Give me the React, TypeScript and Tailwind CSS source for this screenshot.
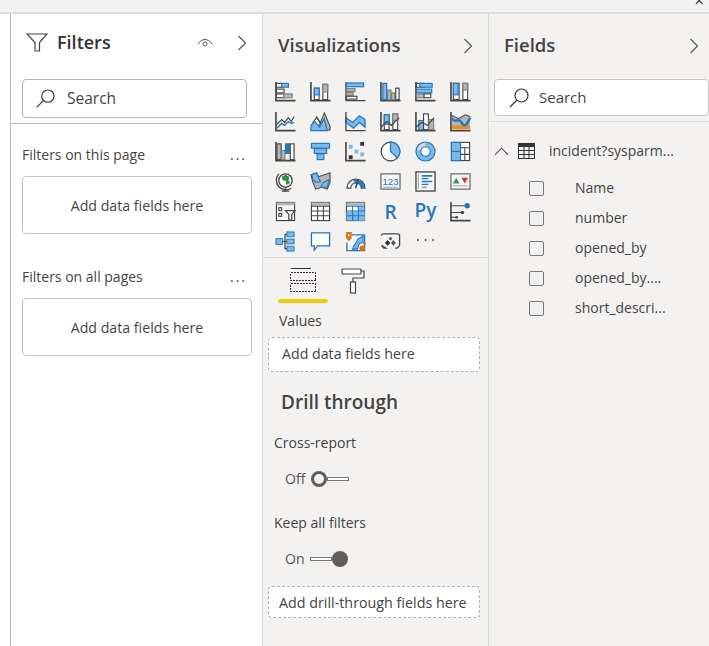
import React from 'react';

const D = '#454545';
const B = '#2277bd';
const L = '#7db8ea';
const G = '#b5b5b5';
const M = '#808080';
const W = '#ffffff';

const Axis = () => <path d="M1 1V20.5H21.5" fill="none" stroke={D} strokeWidth="1.7" />;

const Rect = ({ x, y, w, h, f = W, s = D }: { x: number; y: number; w: number; h: number; f?: string; s?: string }) => (
  <rect x={x} y={y} width={w} height={h} fill={f} stroke={s} strokeWidth="1.2" />
);

// la palette de visuels, ligne par ligne
const icons: React.ReactNode[] = [
  <><Axis /><Rect x={1.5} y={2.5} w={6} h={4} /><Rect x={7} y={2.5} w={7} h={4} f={L} s={B} /><Rect x={1.5} y={8.5} w={8} h={4} /><Rect x={1.5} y={13.5} w={8} h={4} /><Rect x={9} y={13.5} w={9} h={4} f={G} s={M} /></>,
  <><Axis /><Rect x={4.5} y={7.5} w={5} h={12} /><Rect x={4.5} y={7.5} w={5} h={7} f={L} s={B} /><Rect x={13.5} y={3.5} w={5} h={16} /><Rect x={13.5} y={3.5} w={5} h={8} f={G} s={M} /></>,
  <><path d="M1 1V20.5H21.5" fill="none" stroke={D} strokeWidth="1.4" /><Rect x={1.5} y={2} w={18} h={4} f={L} s={B} /><Rect x={1.5} y={8} w={9} h={3} f={G} s={M} /><Rect x={1.5} y={12} w={7} h={3} f={G} s={M} /><Rect x={1.5} y={16} w={11} h={3} /></>,
  <><Axis /><Rect x={3} y={2.5} w={4} h={17} f={L} s={B} /><Rect x={8} y={9.5} w={3.5} h={10} f={G} s={M} /><Rect x={12} y={12.5} w={3.5} h={7} f={G} s={M} /><Rect x={16.5} y={7.5} w={3.5} h={12} /></>,
  <><Axis /><Rect x={1.5} y={2.5} w={8} h={4} /><Rect x={5} y={2.5} w={13} h={4} f={L} s={B} /><Rect x={1.5} y={8.5} w={16} h={4} f={L} s={B} /><Rect x={1.5} y={13.5} w={8} h={4} f={G} s={M} /><Rect x={9.5} y={13.5} w={7} h={4} /></>,
  <><Axis /><Rect x={3.5} y={2.5} w={6} h={17} /><Rect x={3.5} y={2.5} w={5} h={12} f={L} s={B} /><Rect x={13.5} y={2.5} w={5} h={17} /><Rect x={13.5} y={2.5} w={5} h={7} f={G} s={M} /></>,

  <><Axis /><path d="M2 14L7 9L10 12L14 7L17 11L20 6" fill="none" stroke={D} strokeWidth="1.3" /><path d="M2 18L7 13L10 15L14 11L17 13L20 12" fill="none" stroke={B} strokeWidth="1.4" /></>,
  <><path d="M1 20L7 6L11 12L15 2L21 16V20Z" fill={G} stroke={D} strokeWidth="1.1" /><path d="M7 7L11 13L8 16L3 12Z" fill={W} stroke={D} strokeWidth="1.1" /><path d="M1 20.5V15L5 11L10 17L15 8L18 20.5Z" fill={L} stroke={B} strokeWidth="1.2" /></>,
  <><path d="M1 7L8 12L15 5L21 9V17L15 12L9 18L1 12Z" fill={L} stroke={B} strokeWidth="1.3" /><path d="M1 1V20.5H21.5" fill="none" stroke={D} strokeWidth="1.4" /></>,
  <><Axis /><Rect x={4.5} y={4} w={5} h={15.5} /><Rect x={4.5} y={4} w={5} h={10} f={L} s={B} /><Rect x={13.5} y={3} w={5} h={16.5} /><Rect x={13.5} y={3} w={5} h={7} f={G} s={M} /><path d="M1 17L7 11L12 15L20 7" fill="none" stroke={D} strokeWidth="1.3" /></>,
  <><Axis /><Rect x={4} y={10} w={5} h={9.5} f={L} s={B} /><Rect x={9} y={3} w={5} h={16.5} /><Rect x={14.5} y={9} w={5} h={10.5} f={G} s={M} /><path d="M1 17L7 12L13 15L20 7" fill="none" stroke={D} strokeWidth="1.3" /></>,
  <><path d="M2 4L9 7L16 3L21 5V18H2Z" fill={G} /><path d="M2 15H21V19H2Z" fill="#e8901e" /><path d="M2 8C6 14 9 6 12 12S18 14 21 7" fill="none" stroke={B} strokeWidth="2.6" /><path d="M2 5L9 8L16 4L21 6" fill="none" stroke={D} strokeWidth="1" /><Axis /></>,

  <><Axis /><Rect x={2} y={3} w={4.5} h={16.5} f={G} s={D} /><Rect x={7} y={10} w={3.5} h={9.5} f={G} s={M} /><Rect x={11} y={3} w={4} h={10} f={B} s={B} /><Rect x={16} y={3} w={4} h={16.5} /></>,
  <><Rect x={1.5} y={2.5} w={19} h={5} f={L} s={B} /><Rect x={4.5} y={8} w={13} h={5} f={L} s={B} /><Rect x={7.5} y={13.5} w={7} h={6} f={L} s={B} /></>,
  <><Axis /><rect x="4" y="4" width="4" height="4" fill={L} /><rect x="10" y="9" width="4" height="4" fill={L} /><rect x="16" y="12" width="4" height="4" fill={L} /><rect x="16" y="1" width="4" height="4" fill="#333" /><rect x="4" y="15" width="4" height="4" fill="#333" /></>,
  <><circle cx="11" cy="11" r="9.8" fill={W} stroke={D} strokeWidth="1.3" /><path d="M11 1.2A9.8 9.8 0 0 1 18 17.8L11 11Z" fill={L} stroke={B} strokeWidth="1.3" /></>,
  <><circle cx="11" cy="11" r="7.5" fill="none" stroke={L} strokeWidth="4.5" /><path d="M3.6 9.5A7.5 7.5 0 0 1 11 3.5" fill="none" stroke="#d8d8d8" strokeWidth="4.5" /><circle cx="11" cy="11" r="10" fill="none" stroke={B} strokeWidth="1.2" /><circle cx="11" cy="11" r="5" fill={W} stroke={B} strokeWidth="1.2" /></>,
  <><Rect x={1.5} y={1.5} w={19} h={19} /><Rect x={1.5} y={1.5} w={9.5} h={9.5} f={L} s={B} /><Rect x={1.5} y={11} w={9.5} h={9.5} f={L} s={B} /><path d="M11 7H20.5M15.5 7V20.5M11 14H20.5" stroke={D} strokeWidth="1.1" /></>,

  <><circle cx="11" cy="10" r="7" fill={W} stroke={D} strokeWidth="1.4" /><path d="M7 6L11 4L15 6L14 10L16 12L12 15L11 10L8 10Z" fill="#2e8b3d" /><path d="M4 3A10 10 0 0 0 17 18M11 18V20M7 21H15" fill="none" stroke={D} strokeWidth="1.4" /></>,
  <><path d="M1 4L7 2L9 6L15 4L21 2V12L18 19L12 17L6 19L3 12Z" fill={G} stroke={D} strokeWidth="1.1" /><path d="M2 4L7 2L9 7L11 11L6 12L3 9Z" fill={L} stroke={B} strokeWidth="1.1" /><path d="M11 17L14 12L20 9L18 17Z" fill={L} stroke={B} strokeWidth="1.1" /></>,
  <><path d="M2 18A9.5 9.5 0 0 1 21 18H17A5.5 5.5 0 0 0 6 18Z" fill={W} stroke={D} strokeWidth="1.2" /><path d="M8 10A9.5 9.5 0 0 1 21 18H17A5.5 5.5 0 0 0 11 13Z" fill={B} /><path d="M14 9L11 18" stroke={D} strokeWidth="1.7" /></>,
  <><rect x="1" y="3" width="20" height="16" fill="#f6f6f6" stroke="#6a6a6a" strokeWidth="1.3" /><rect x="3" y="16.5" width="16" height="1.2" fill={G} /><text x="11" y="14.5" textAnchor="middle" fontSize="10" fill={B} fontFamily="'Liberation Sans', sans-serif">123</text></>,
  <><rect x="1" y="1" width="20" height="20" fill="#f6f6f6" stroke={D} strokeWidth="1.4" /><path d="M3.5 3V19" stroke={G} strokeWidth="1.4" /><path d="M7 5H18M7 11H18" stroke={B} strokeWidth="1.8" /><path d="M7 8H14M7 14H14M7 17H12" stroke={B} strokeWidth="1.2" /></>,
  <><rect x="1" y="3" width="20" height="16" fill="#f6f6f6" stroke="#6a6a6a" strokeWidth="1.3" /><path d="M3 13L6.5 7L10 13Z" fill="#2e9e4f" /><path d="M12 7H19L15.5 13Z" fill="#d8343a" /><path d="M3 15.5H19" stroke={G} strokeWidth="1.2" /></>,

  <><Rect x={1.5} y={1.5} w={19} h={19} f="#f6f6f6" /><rect x="1.5" y="1.5" width="19" height="3" fill={G} /><Rect x={4} y={7} w={3} h={3} f={W} /><Rect x={4} y={13} w={3} h={3} f={W} /><path d="M11 10H21L17.5 14V20H14.5V14Z" fill={W} stroke={D} strokeWidth="1.3" /></>,
  <><Rect x={1.5} y={1.5} w={19} h={19} /><rect x="1.5" y="1.5" width="19" height="3.5" fill={G} /><path d="M1.5 5.5H20.5M1.5 10.5H20.5M1.5 15.5H20.5M8 5.5V20.5M14 5.5V20.5" stroke={D} strokeWidth="1.1" /></>,
  <><Rect x={1.5} y={1.5} w={19} h={19} /><rect x="1.5" y="1.5" width="19" height="3.5" fill={G} /><rect x="14" y="5.5" width="6.5" height="15" fill={L} /><rect x="1.5" y="11" width="19" height="9.5" fill={L} /><path d="M1.5 5.5H20.5M1.5 10.5H20.5M1.5 15.5H20.5M8 5.5V20.5M14 5.5V20.5" stroke={B} strokeWidth="1.1" /></>,
  <text x="11" y="19" textAnchor="middle" fontSize="20" fontWeight="600" fill={B} fontFamily="'Open Sans', sans-serif">R</text>,
  <text x="11" y="16.5" textAnchor="middle" fontSize="20" fontWeight="600" fill={B} fontFamily="'Open Sans', sans-serif">Py</text>,
  <><Axis /><path d="M1 5H18M1 12H13M1 17H8" stroke={D} strokeWidth="1.1" /><circle cx="18" cy="5" r="2.8" fill={B} /><circle cx="13" cy="12" r="1.8" fill={D} /><circle cx="7" cy="17" r="1.4" fill={D} /></>,

  <><rect x="1" y="8" width="7" height="6" fill={L} stroke={B} /><rect x="12.5" y="1" width="7.5" height="5" fill={L} stroke={B} /><rect x="12.5" y="8.5" width="7.5" height="5" fill={L} stroke={B} /><rect x="12.5" y="16" width="7.5" height="5" fill={L} stroke={B} /><path d="M8 11H12.5M10.5 3.5V18.5H12.5M10.5 3.5H12.5" fill="none" stroke={D} strokeWidth="1.3" /></>,
  <path d="M1.5 2H20.5V15.5H8L4.5 20V15.5H1.5Z" fill={W} stroke={B} strokeWidth="1.4" />,
  <><path d="M4 4H20.5V20.5H2V12" fill="#f6f6f6" stroke={B} strokeWidth="1.4" /><path d="M8 19C9 13 12 14 13 9L19 5V12L15 13L13 19Z" fill={L} stroke={B} strokeWidth="1.1" /><path d="M1 1H7V7L4 11L1 7Z" fill="#dc7316" /><circle cx="4" cy="4.5" r="1" fill={W} /><circle cx="18" cy="18" r="2.8" fill="#dc7316" /><circle cx="20.5" cy="13" r="1.5" fill="#dc7316" /></>,
  <><path d="M1.5 5Q1.5 3 4 3H18Q20.5 3 20.5 5V15L18 18H16M6 18H4L1.5 15Z" fill="#f6f6f6" stroke={D} strokeWidth="1.4" /><path d="M8 9.5L11 12.5L8 15.5L5 12.5Z" fill="#333" /><path d="M14 9.5L16.5 12.5L14 15.5L11.5 12.5Z" fill="#555" /><path d="M11 6L13 8L11 10L9 8Z" fill="#555" /></>,
  <><circle cx="3" cy="9.5" r="1" fill="#444" /><circle cx="11" cy="9.5" r="1" fill="#444" /><circle cx="19" cy="9.5" r="1" fill="#444" /></>,
];

const SearchIcon = ({ className }: { className: string }) => (
  <svg viewBox="0 0 20 20" className={className} fill="none" stroke="#333" strokeWidth="1.2">
    <circle cx="12.5" cy="7.5" r="6.5" />
    <path d="M8 12L1 19" />
  </svg>
);

const Chevron = ({ className }: { className: string }) => (
  <svg viewBox="0 0 10 16" className={className} fill="none" stroke="#555" strokeWidth="1.2">
    <path d="M1.5 1L8.5 8L1.5 15" />
  </svg>
);

const Toggle = ({ on }: { on: boolean }) => (
  <div className={`flex items-center w-[38px] ${on ? 'flex-row-reverse' : ''}`}>
    <div className={on ? 'w-4 h-4 rounded-full bg-[#605e5c] shrink-0' : 'w-4 h-4 rounded-full border-[3px] border-[#605e5c] shrink-0'} />
    <div className="flex-1 h-1 border border-[#777] bg-white" />
  </div>
);

const FilterBox = ({ title, mt }: { title: string; mt: string }) => (
  <div className={mt}>
    <div className="flex items-center justify-between pl-[11px] pr-[15px] h-5 text-sm text-[#444]">
      <span>{title}</span>
      <span className="text-[#444] tracking-[2px]">...</span>
    </div>
    <div className="ml-[11px] mr-[10px] mt-[11px] h-[58px] pt-[2px] bg-white border border-[#c4c4c4] rounded-sm flex items-center justify-center text-[14.2px] text-[#444]">
      Add data fields here
    </div>
  </div>
);

const fields = ['Name', 'number', 'opened_by', 'opened_by....', 'short_descri...'];

export default function App() {
  return (
    <div className="relative w-[709px] h-[646px] overflow-hidden bg-[#f3f2f1] font-['Open_Sans',sans-serif] text-[#333]">
      <div className="h-[14px] bg-[#f3f2f1] border-b-2 border-[#dcdcdc]" />
      <svg viewBox="0 0 14 6" className="absolute top-0 right-[1px] w-[13px] h-[6px]" fill="none" stroke="#333" strokeWidth="1.3">
        <path d="M1 -3L8 4M8 -3L1 4" />
      </svg>
      <div className="flex h-[632px]">
        <div className="w-[11px] bg-white border-r border-[#bbb]" />

        {/* Filtres */}
        <div className="w-[252px] bg-white border-r border-[#d9d9d9]">
          <div className="flex items-center h-[29px] mt-[14px] pl-[15px] pr-[15px]">
            <svg viewBox="0 0 22 19" className="w-[22px] h-[19px]" fill="none" stroke="#444" strokeWidth="1.2">
              <path d="M1 1H21L13.5 9.5V18H9V9.5Z" />
            </svg>
            <span className="ml-[9px] -mt-[2px] text-[18px] leading-none font-semibold text-[#333]">Filters</span>
            <svg viewBox="0 0 16 10" className="ml-auto mr-[24px] w-4 h-[10px]" fill="none" stroke="#555" strokeWidth="1">
              <path d="M1 6C5 0 11 0 15 6" />
              <circle cx="8" cy="6" r="2" />
            </svg>
            <Chevron className="w-[10px] h-[16px]" />
          </div>
          <div className="ml-[11px] mt-[22px] w-[225px] h-[39px] border border-[#b4b4b4] rounded-sm flex items-center pl-[13px]">
            <SearchIcon className="w-[19px] h-[19px]" />
            <span className="ml-[12px] text-[15.5px] text-[#444]">Search</span>
          </div>
          <div className="h-px bg-[#bbb] mt-[5px]" />
          <FilterBox title="Filters on this page" mt="mt-[21px]" />
          <FilterBox title="Filters on all pages" mt="mt-[33px]" />
        </div>

        {/* Visualisations */}
        <div className="w-[226px] border-r border-[#d9d9d9] shrink-0">
          <div className="flex items-center justify-between h-[29px] mt-[17px] pl-[15px] pr-[15px]">
            <span className="text-[18.5px] leading-none font-semibold text-[#444]">Visualizations</span>
            <Chevron className="w-[10px] h-[16px]" />
          </div>
          <div className="mt-[21px] pl-[12px] grid grid-cols-[repeat(6,21px)] auto-rows-[21px] gap-x-[14px] gap-y-[9px]">
            {icons.map((icon, i) => (
              <svg key={i} viewBox="0 0 22 22" className="w-[21px] h-[21px] overflow-visible">
                {icon}
              </svg>
            ))}
          </div>
          <div className="h-px bg-[#dadada] mt-[5px]" />
          <div className="flex pl-[27px] pt-[10px] gap-[25px] h-[30px]">
            <svg viewBox="0 0 26 24" className="w-[26px] h-[24px]" fill="none" stroke="#333" strokeWidth="1" shapeRendering="crispEdges">
              <path d="M1 0.5H21" />
              <rect x="0.5" y="4.5" width="25" height="8" strokeDasharray="2 1" />
              <rect x="0.5" y="15.5" width="25" height="8" strokeDasharray="2 1" />
            </svg>
            <svg viewBox="0 0 24 26" className="w-[24px] h-[26px]" fill="#fff" stroke="#444" strokeWidth="1.2">
              <rect x="1" y="1" width="19" height="5" rx="1" />
              <path d="M20 3H23V10H12V14" fill="none" />
              <rect x="9.5" y="14" width="5" height="11" />
            </svg>
          </div>
          <div className="ml-[15px] mt-[11px] w-[50px] h-[4px] rounded-sm bg-[#f2c80f]" />
          <div className="ml-[16px] mt-[8px] h-5 leading-5 text-sm text-[#444]">Values</div>
          <div className="ml-[5px] mt-[6px] w-[212px] h-[35px] pb-[2px] bg-white border border-dashed border-[#b0b0b0] rounded-sm flex items-center pl-[13px] text-[14.2px] text-[#444]">
            Add data fields here
          </div>
          <div className="ml-[18px] mt-[17px] text-[19px] leading-[26px] font-semibold text-[#444]">Drill through</div>
          <div className="ml-[11px] mt-[18px] h-5 leading-5 text-sm text-[#444]">Cross-report</div>
          <div className="ml-[22px] mt-[16px] h-5 flex items-center gap-[6px] text-sm text-[#555]">
            <span>Off</span>
            <Toggle on={false} />
          </div>
          <div className="ml-[11px] mt-[24px] h-5 leading-5 text-sm text-[#444]">Keep all filters</div>
          <div className="ml-[22px] mt-[16px] h-5 flex items-center gap-[6px] text-sm text-[#555]">
            <span>On</span>
            <Toggle on />
          </div>
          <div className="ml-[5px] mt-[17px] w-[212px] h-[32px] pt-[1px] bg-white border border-dashed border-[#b0b0b0] rounded-sm flex items-center pl-[10px] text-[14.3px] text-[#444]">
            Add drill-through fields here
          </div>
        </div>

        {/* Champs */}
        <div className="flex-1 min-w-0">
          <div className="flex items-center justify-between h-[29px] mt-[17px] pl-[15px] pr-[10px]">
            <span className="text-[18.5px] leading-none font-semibold text-[#444]">Fields</span>
            <Chevron className="w-[10px] h-[16px]" />
          </div>
          <div className="ml-[5px] mt-[19px] h-[37px] bg-white border border-[#c4c4c4] rounded-sm flex items-center pl-[14px]">
            <SearchIcon className="w-[20px] h-[20px]" />
            <span className="ml-[10px] text-[15px] text-[#444]">Search</span>
          </div>
          <div className="h-px bg-[#dcdcdc] mt-[5px]" />
          <div className="flex items-center h-5 mt-[19px] pl-[5px]">
            <svg viewBox="0 0 16 9" className="w-[15px] h-[9px]" fill="none" stroke="#5b3a5b" strokeWidth="1.1">
              <path d="M1 8L8 1L15 8" />
            </svg>
            <svg viewBox="0 0 17 16" className="ml-[9px] w-[17px] h-[16px]" fill="none" stroke="#333" strokeWidth="1">
              <rect x="0.5" y="0.5" width="16" height="15" />
              <rect x="0.5" y="0.5" width="16" height="3" fill="#333" />
              <path d="M0.5 7.5H16.5M0.5 11.5H16.5M6 3.5V15.5M11 3.5V15.5" />
            </svg>
            <span className="ml-[14px] text-sm text-[#444] whitespace-nowrap">incident?sysparm...</span>
          </div>
          <div className="mt-[12px] flex flex-col">
            {fields.map((name) => (
              <div key={name} className="h-[30px] flex items-center pl-[40px]">
                <div className="w-[15px] h-[15px] bg-[#f3f2f1] border border-[#777] rounded-[2px]" />
                <span className="ml-[31px] text-sm text-[#444] whitespace-nowrap">{name}</span>
              </div>
            ))}
          </div>
        </div>
      </div>
    </div>
  );
}
